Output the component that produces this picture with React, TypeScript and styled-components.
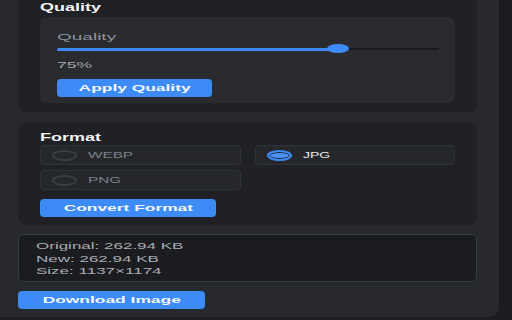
import styled, { createGlobalStyle } from "styled-components";

const GlobalStyle = createGlobalStyle`
  html, body {
    margin: 0;
    padding: 0;
    background: #1b1c1f;
    overflow: hidden;
  }
  body {
    font-family: "Liberation Sans", Arial, sans-serif;
  }
`;

const Panel = styled.div`
  width: 499px;
  box-sizing: border-box;
  margin-top: -10px;
  padding: 0 22px 8px 18px;
  background: #28292d;
  border-radius: 0 0 10px 0;
  display: flex;
  flex-direction: column;
  gap: 9px;
`;

const Section = styled.section<{ $pt: number; $pb: number; $mt?: number }>`
  background: #202124;
  border-radius: 8px;
  padding: ${(p) => p.$pt}px 22px ${(p) => p.$pb}px;
  margin-top: ${(p) => p.$mt ?? 0}px;
  display: flex;
  flex-direction: column;
  align-items: flex-start;
`;

const Title = styled.h3`
  margin: 0;
  font-size: 10px;
  font-weight: 700;
  line-height: 15px;
  color: #f2f3f5;
`;

const Wide = styled.span<{ $sx?: number; $center?: boolean }>`
  display: inline-block;
  white-space: nowrap;
  transform: scaleX(${(p) => p.$sx ?? 2});
  transform-origin: ${(p) => (p.$center ? "center" : "left")} center;
`;

const Card = styled.div`
  align-self: stretch;
  margin-top: 2px;
  background: #2a2b2f;
  border-radius: 7px;
  padding: 13px 16px 6px 17px;
  display: flex;
  flex-direction: column;
  align-items: flex-start;
`;

const Label = styled.div`
  font-size: 9.5px;
  line-height: 14px;
  color: #8c93a0;
`;

const SliderWrap = styled.div`
  position: relative;
  align-self: stretch;
  height: 10px;
  display: flex;
  align-items: center;
`;

const Track = styled.div`
  flex: 1;
  height: 2px;
  background: #1a1b1e;
  border-radius: 1px;
  display: flex;
  align-items: center;
`;

const Fill = styled.div`
  height: 3px;
  background: #3d8bf7;
  border-radius: 2px;
`;

const Thumb = styled.div`
  position: absolute;
  top: 0;
  width: 22px;
  height: 9px;
  border-radius: 50%;
  background: #3d8bf7;
`;

const Value = styled.div`
  margin-top: 4px;
  font-size: 9.5px;
  line-height: 14px;
  color: #a3a7ae;
`;

const Button = styled.button<{ $w: number; $mt?: number }>`
  width: ${(p) => p.$w}px;
  height: 18px;
  margin-top: ${(p) => p.$mt ?? 0}px;
  padding: 0;
  border: 0;
  border-radius: 4px;
  background: #3d8bf7;
  color: #f4f7fc;
  font-family: inherit;
  font-weight: 700;
  font-size: 9.5px;
  line-height: 18px;
  text-align: center;
  cursor: pointer;
`;

const Options = styled.div`
  align-self: stretch;
  display: grid;
  grid-template-columns: 1fr 1fr;
  column-gap: 14px;
  row-gap: 5px;
`;

const Option = styled.label<{ $active?: boolean }>`
  height: 20px;
  box-sizing: border-box;
  border: 1px solid #30333a;
  border-radius: 4px;
  background: #25272b;
  display: flex;
  align-items: center;
  gap: 11px;
  padding-left: 11px;
  font-size: 8.5px;
  color: ${(p) => (p.$active ? "#e9eaec" : "#7b818b")};
`;

const Radio = styled.span<{ $active?: boolean }>`
  width: 25px;
  height: 11px;
  box-sizing: border-box;
  border-radius: 50%;
  border: 2px solid ${(p) => (p.$active ? "#3d8bf7" : "#3a3d44")};
  background: ${(p) => (p.$active ? "#4a93f8" : "transparent")};
  box-shadow: ${(p) => (p.$active ? "inset 0 0 0 1px #25272b" : "none")};
`;

const Info = styled.div`
  border: 1px solid #363d4a;
  background: #1b1c1f;
  border-radius: 5px;
  padding: 5px 17px 3px;
  font-size: 8.5px;
  line-height: 12.5px;
  color: #a9adb4;
`;

const formats = ["WEBP", "JPG", "PNG"];

const App = () => {
  const quality = 75;
  const selected = "JPG";
  const thumbLeft = `calc((100% - 22px) * ${quality / 100})`;

  return (
    <>
      <GlobalStyle />
      <Panel>
        <Section $pt={10} $pb={9}>
          <Title>
            <Wide $sx={1.8}>Quality</Wide>
          </Title>
          <Card>
            <Label>
              <Wide>Quality</Wide>
            </Label>
            <SliderWrap>
              <Track>
                <Fill style={{ width: `calc(${thumbLeft} + 11px)` }} />
              </Track>
              <Thumb style={{ left: thumbLeft }} />
            </SliderWrap>
            <Value>
              <Wide $sx={1.85}>{quality}%</Wide>
            </Value>
            <Button $w={155} $mt={7}>
              <Wide $sx={1.83} $center>
                Apply Quality
              </Wide>
            </Button>
          </Card>
        </Section>

        <Section $pt={8} $pb={8} $mt={1}>
          <Title>
            <Wide $sx={1.8}>Format</Wide>
          </Title>
          <Options>
            {formats.map((f) => (
              <Option key={f} $active={f === selected}>
                <Radio $active={f === selected} />
                <Wide $sx={f === selected ? 1.65 : 1.8}>{f}</Wide>
              </Option>
            ))}
          </Options>
          <Button $w={176} $mt={9}>
            <Wide $sx={1.83} $center>
              Convert Format
            </Wide>
          </Button>
        </Section>

        <Info>
          <div>
            <Wide>Original: 262.94 KB</Wide>
          </div>
          <div>
            <Wide>New: 262.94 KB</Wide>
          </div>
          <div>
            <Wide>Size: 1137×1174</Wide>
          </div>
        </Info>

        <Button $w={187}>
          <Wide $sx={1.83} $center>
            Download Image
          </Wide>
        </Button>
      </Panel>
    </>
  );
};

export default App;
